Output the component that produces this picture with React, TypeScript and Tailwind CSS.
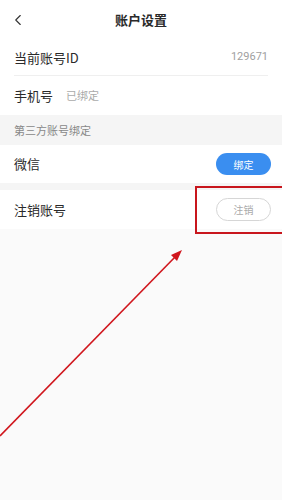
import { ChevronLeft } from "lucide-react";

function App() {
	return (
		<main
			className="relative min-h-[500px] w-full overflow-hidden bg-[#fafafa] text-[#2a2a2a]"
			style={{ fontFamily: '"Noto Sans CJK SC", "Noto Sans", sans-serif' }}
		>
			<header className="relative flex h-10 items-center justify-center bg-white">
				<ChevronLeft className="absolute left-[9px] top-[11px] size-[18px] text-[#333]" strokeWidth={1.5} />
				<h1 className="text-[13px] font-bold">账户设置</h1>
			</header>

			<section className="bg-white px-[14px]">
				<div className="flex h-[36px] items-center justify-between border-b border-[#efefef]">
					<span className="text-[13px]">当前账号ID</span>
					<span className="text-[11px] text-[#a0a0a0]" style={{ fontFamily: "Roboto, sans-serif" }}>
						129671
					</span>
				</div>
				<div className="flex h-[39px] items-center gap-[13px]">
					<span className="text-[13px]">手机号</span>
					<span className="text-[11px] text-[#aaa]">已绑定</span>
				</div>
			</section>

			<div className="flex h-[30px] items-center bg-[#f5f5f5] px-[14px] text-[11px] text-[#888]">第三方账号绑定</div>

			<section className="flex h-[38px] items-center justify-between bg-white pl-[14px] pr-[11px]">
				<span className="text-[13px]">微信</span>
				<button className="flex h-[22px] w-[55px] items-center justify-center rounded-full bg-[#3a8ef0] text-[10px] text-white">
					绑定
				</button>
			</section>

			<div className="h-[7px] bg-[#f5f5f5]" />

			<section className="flex h-[39px] items-center justify-between bg-white pl-[14px] pr-[11px]">
				<span className="text-[13px]">注销账号</span>
				<button className="flex h-[23px] w-[55px] items-center justify-center rounded-full border border-[#d6d6d6] text-[10px] text-[#aaa]">
					注销
				</button>
			</section>

			{/* annotation overlay */}
			<div className="absolute left-[195px] top-[186px] h-[48px] w-[90px] border-2 border-[#c8161d]" />
			<svg className="absolute left-0 top-0" width="282" height="500" viewBox="0 0 282 500">
				<line x1="0" y1="436" x2="177" y2="255" stroke="#d0161d" strokeWidth="1.6" />
				<polygon points="182,250 171,255 177,261" fill="#d0161d" />
			</svg>
		</main>
	);
}

export default App;
